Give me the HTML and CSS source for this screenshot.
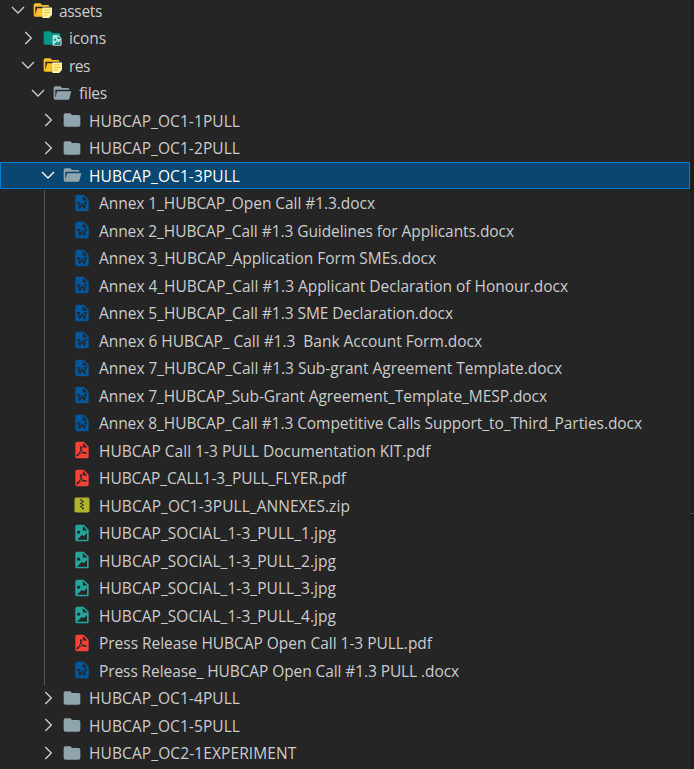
FILE: index.html
```html
<!DOCTYPE html>
<html lang="en">
<head>
<meta charset="utf-8">
<title>Explorer</title>
<link rel="stylesheet" href="styles.css">
</head>
<body>
<svg class="sprite" aria-hidden="true">
  <symbol id="down" viewBox="0 0 20 20"><path d="M4 7l6 6 6-6" fill="none" stroke="currentColor" stroke-width="1.4"/></symbol>
  <symbol id="right" viewBox="0 0 20 20"><path d="M7.3 4l6 6-6 6" fill="none" stroke="currentColor" stroke-width="1.4"/></symbol>
  <symbol id="folder" viewBox="0 0 24 24"><path fill="#90a4ae" d="M10 4H4a2 2 0 0 0-2 2v12a2 2 0 0 0 2 2h16a2 2 0 0 0 2-2V8a2 2 0 0 0-2-2h-8z"/></symbol>
  <symbol id="open" viewBox="0 0 24 24"><path fill="#90a4ae" d="M19 20H4a2 2 0 0 1-2-2V6a2 2 0 0 1 2-2h6l2 2h7a2 2 0 0 1 2 2H4v10l2.14-8h17.07l-2.28 8.5c-.23.87-1.01 1.5-1.93 1.5z"/></symbol>
  <symbol id="resource" viewBox="0 0 24 24"><path fill="#fbc02d" d="M19 20H4a2 2 0 0 1-2-2V6a2 2 0 0 1 2-2h6l2 2h7a2 2 0 0 1 2 2H4v10l2.14-8h17.07l-2.28 8.5c-.23.87-1.01 1.5-1.93 1.5z"/><path fill="#fff3a6" d="M12.500 9H24v9l-3.500 3.500h-8z"/><path d="M14.500 12h7.500M14.500 15h7.500M14.500 18h4" fill="none" stroke="#f5bd2c" stroke-width="1.3"/></symbol>
  <symbol id="images" viewBox="0 0 24 24"><path fill="#009688" d="M10 4H4a2 2 0 0 0-2 2v12a2 2 0 0 0 2 2h16a2 2 0 0 0 2-2V8a2 2 0 0 0-2-2h-8z"/><path fill="#b2dfdb" fill-rule="evenodd" d="M14 8.500h5.500l4 4V20a1.300 1.300 0 0 1-1.300 1.300H14a1.300 1.300 0 0 1-1.300-1.300V9.800A1.300 1.300 0 0 1 14 8.500zm4.800 1v3.700h3.700zM14 20h8v-5l-2.600 2.700-1.400-1.400zm1.500-7.300a1.400 1.400 0 1 0 0 2.800 1.400 1.400 0 0 0 0-2.800z"/></symbol>
  <symbol id="word" viewBox="0 0 24 24"><path fill="#01579b" fill-rule="evenodd" d="M6 2h8l6 6v12a2 2 0 0 1-2 2H6a2 2 0 0 1-2-2V4a2 2 0 0 1 2-2zm7 1.500V9h5.500z"/><path d="M6 11.800h4M14 11.800h4M7.700 11.800l1.400 6.900 2.900-5.400 2.900 5.400 1.400-6.900" fill="none" stroke="#252526" stroke-width="1.500" stroke-linejoin="bevel"/></symbol>
  <symbol id="pdf" viewBox="1 0 24 24"><path fill="#f44336" fill-rule="evenodd" d="M14 9h5.500L14 3.500V9M7 2h8l6 6v12a2 2 0 0 1-2 2H7a2 2 0 0 1-2-2V4a2 2 0 0 1 2-2m4.930 10.440c.41.9.93 1.640 1.530 2.150l.41.32c-.87.16-2.070.44-3.340.93l-.11.04.5-1.040c.45-.87.78-1.660 1.010-2.400m6.480 3.810c.18-.18.27-.41.28-.66.03-.2-.02-.39-.12-.55-.29-.47-1.040-.69-2.280-.69l-1.290.07-.87-.58c-.63-.52-1.200-1.430-1.600-2.560l.04-.14c.33-1.330.64-2.940-.02-3.600a.853.853 0 0 0-.61-.24h-.24c-.37 0-.7.39-.79.77-.37 1.330-.15 2.060.22 3.270v.01c-.25.88-.57 1.900-1.080 2.930l-.96 1.800-.89.49c-1.200.75-1.770 1.590-1.880 2.120-.04.19-.02.36.05.54l.03.05.48.31.44.11c.81 0 1.730-.95 2.970-3.070l.18-.07c1.030-.33 2.310-.56 4.030-.75 1.030.51 2.240.74 3 .74.44 0 .74-.11.91-.3"/></symbol>
  <symbol id="zip" viewBox="0 0 24 24"><path fill="#afb42b" fill-rule="evenodd" d="M14 17h-2v-2h-2v-2h2v2h2m0-6h-2v2h2v2h-2v-2h-2V9h2V7h-2V5h2v2h2m5-4H5a2 2 0 0 0-2 2v14a2 2 0 0 0 2 2h14a2 2 0 0 0 2-2V5a2 2 0 0 0-2-2z"/></symbol>
  <symbol id="image" viewBox="0 0 24 24"><path fill="#26a69a" fill-rule="evenodd" d="M13 9h5.500L13 3.500V9M6 2h8l6 6v12a2 2 0 0 1-2 2H6a2 2 0 0 1-2-2V4a2 2 0 0 1 2-2m0 18h12v-8l-4 4-2-2-6 6M8 9a2 2 0 0 0-2 2 2 2 0 0 0 2 2 2 2 0 0 0 2-2 2 2 0 0 0-2-2"/></symbol>
</svg>
<main class="window">
  <div class="tree" id="tree"></div>
  <aside class="gutter"><div class="gutter-line"></div></aside>
</main>
<script src="tree.js"></script>
</body>
</html>
```
FILE: styles.css
```css
body {
  margin: 0;
  background: #252526;
}
.sprite {
  display: none;
}
.window {
  display: flex;
  height: 769px;
  overflow: hidden;
}
.tree {
  width: 690px;
  margin-top: -3px;
  flex: none;
}
.row {
  display: flex;
  align-items: center;
  height: 27.5px;
  box-sizing: border-box;
  padding-left: 8px;
  color: #cccccc;
  font-family: "Open Sans", "Noto Sans", sans-serif;
  font-size: 15.5px;
  line-height: 27px;
  white-space: pre;
}
.row.selected {
  height: 27px;
  margin-bottom: 0.5px;
  background: #094771;
  color: #ffffff;
  box-shadow: inset 0 0 0 1px #007fd4;
}
.indent {
  width: 10px;
  height: 100%;
  flex: none;
  box-sizing: border-box;
}
.indent.guide {
  width: 11px;
  margin-left: -4px;
  margin-right: 3px;
  border-right: 1px solid #585858;
}
.twistie {
  width: 20px;
  height: 20px;
  margin-right: 4px;
  margin-top: -1px;
  flex: none;
}
.icon {
  width: 20px;
  height: 20px;
  margin-right: 7px;
  margin-top: -1px;
  flex: none;
}
.label {
  flex: none;
  margin-top: 1px;
}
.selected .label {
  margin-top: 1.5px;
}
.gutter {
  flex: 1;
  background: #1e1e1e;
}
.gutter-line {
  height: 1px;
  margin-top: 513px;
  background: #444444;
}
```
FILE: tree.js
```js
// Each entry: depth, twistie, icon, label, label width in px
const rows = [
  [0, "down", "resource", "assets", 43],
  [1, "right", "images", "icons", 37],
  [1, "down", "resource", "res", 21],
  [2, "down", "open", "files", 28],
  [3, "right", "folder", "HUBCAP_OC1-1PULL", 151],
  [3, "right", "folder", "HUBCAP_OC1-2PULL", 151],
  [3, "down", "open", "HUBCAP_OC1-3PULL", 151],
  [4, "", "word", "Annex 1_HUBCAP_Open Call #1.3.docx", 276],
  [4, "", "word", "Annex 2_HUBCAP_Call #1.3 Guidelines for Applicants.docx", 415],
  [4, "", "word", "Annex 3_HUBCAP_Application Form SMEs.docx", 337],
  [4, "", "word", "Annex 4_HUBCAP_Call #1.3 Applicant Declaration of Honour.docx", 469],
  [4, "", "word", "Annex 5_HUBCAP_Call #1.3 SME Declaration.docx", 354],
  [4, "", "word", "Annex 6 HUBCAP_ Call #1.3  Bank Account Form.docx", 383],
  [4, "", "word", "Annex 7_HUBCAP_Call #1.3 Sub-grant Agreement Template.docx", 463],
  [4, "", "word", "Annex 7_HUBCAP_Sub-Grant Agreement_Template_MESP.docx", 448],
  [4, "", "word", "Annex 8_HUBCAP_Call #1.3 Competitive Calls Support_to_Third_Parties.docx", 543],
  [4, "", "pdf", "HUBCAP Call 1-3 PULL Documentation KIT.pdf", 331.5],
  [4, "", "pdf", "HUBCAP_CALL1-3_PULL_FLYER.pdf", 247],
  [4, "", "zip", "HUBCAP_OC1-3PULL_ANNEXES.zip", 251],
  [4, "", "image", "HUBCAP_SOCIAL_1-3_PULL_1.jpg", 237],
  [4, "", "image", "HUBCAP_SOCIAL_1-3_PULL_2.jpg", 237],
  [4, "", "image", "HUBCAP_SOCIAL_1-3_PULL_3.jpg", 237],
  [4, "", "image", "HUBCAP_SOCIAL_1-3_PULL_4.jpg", 237],
  [4, "", "pdf", "Press Release HUBCAP Open Call 1-3 PULL.pdf", 333],
  [4, "", "word", "Press Release_ HUBCAP Open Call #1.3 PULL .docx", 360],
  [3, "right", "folder", "HUBCAP_OC1-4PULL", 151],
  [3, "right", "folder", "HUBCAP_OC1-5PULL", 151],
  [3, "right", "folder", "HUBCAP_OC2-1EXPERIMENT", 207.5]
];
const use = (cls, id) => `<svg class="${cls}">${id ? `<use href="#${id}"/>` : ""}</svg>`;
document.getElementById("tree").innerHTML = rows.map(([depth, twistie, icon, label], i) => {
  let indents = "";
  for (let d = 0; d < depth; d++) {
    indents += `<span class="indent${d === 3 ? " guide" : ""}"></span>`;
  }
  return `<div class="row${i === 6 ? " selected" : ""}">${indents}${use("twistie", twistie)}${use("icon", icon)}<span class="label">${label}</span></div>`;
}).join("");
// Spread the letters so that every label takes its width.
document.querySelectorAll(".label").forEach((el, i) => {
  const natural = el.getBoundingClientRect().width;
  el.style.letterSpacing = (rows[i][4] - natural) / rows[i][3].length + "px";
});
```
